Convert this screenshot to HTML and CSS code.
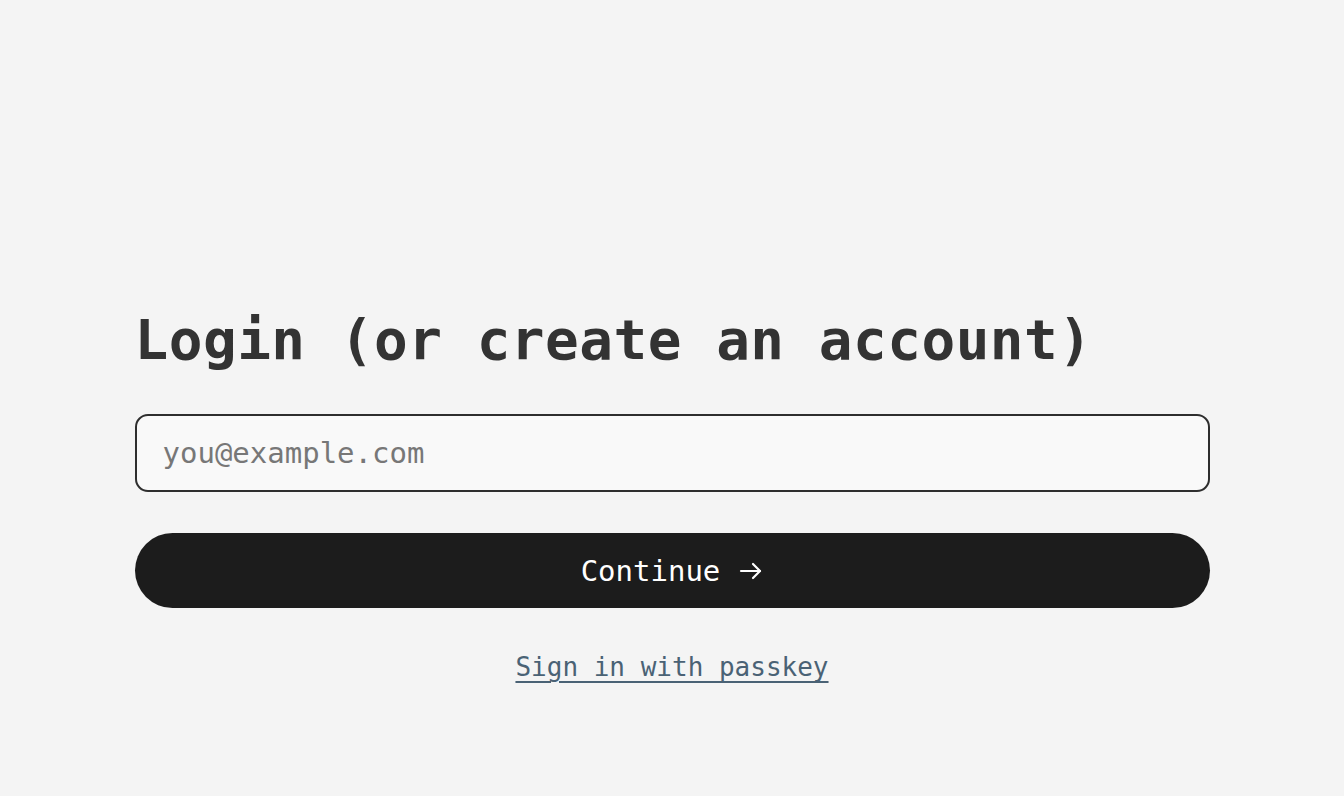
FILE: index.html
```html
<!DOCTYPE html>
<html lang="en">
<head>
<meta charset="utf-8">
<title>Login</title>
<link rel="stylesheet" href="styles.css">
</head>
<body>
<main class="page">
  <section class="login">
    <h1 class="login-title">Login (or create an account)</h1>
    <form class="login-form">
      <input class="email-input" type="email" placeholder="you@example.com">
      <button class="continue-btn" type="button">
        <span>Continue</span>
        <svg class="arrow" width="24" height="24" viewBox="0 0 24 24" fill="none" stroke="currentColor" stroke-width="2.2" stroke-linecap="round" stroke-linejoin="round"><path d="M2 12h19"/><path d="M14 5l7 7-7 7"/></svg>
      </button>
    </form>
    <a class="passkey-link" href="#">Sign in with passkey</a>
  </section>
</main>
</body>
</html>
```
FILE: styles.css
```css
* { box-sizing: border-box; }
html, body {
  margin: 0;
  padding: 0;
  background: #f4f4f4;
  height: 100%;
}
body {
  font-family: "DejaVu Sans Mono", "Liberation Mono", monospace;
  color: #333333;
}
.page {
  display: flex;
  justify-content: center;
  padding-top: 306px;
}
.login {
  width: 1075px;
  display: flex;
  flex-direction: column;
}
.login-title {
  margin: 0 0 41px 0;
  font-size: 56px;
  line-height: 67px;
  font-weight: 700;
  color: #333333;
  letter-spacing: 0.5px;
}
.login-form {
  display: flex;
  flex-direction: column;
  gap: 41px;
}
.email-input {
  height: 78px;
  width: 100%;
  border: 2px solid #2e2e2e;
  border-radius: 13px;
  background: #f9f9f9;
  padding: 0 26px;
  font-family: inherit;
  font-size: 29px;
  color: #333;
  outline: none;
}
.email-input::placeholder {
  color: #777777;
}
.continue-btn {
  height: 75px;
  width: 100%;
  border: none;
  border-radius: 38px;
  background: #1c1c1c;
  color: #ffffff;
  font-family: inherit;
  font-size: 29px;
  display: flex;
  align-items: center;
  justify-content: center;
  gap: 19px;
  cursor: pointer;
}
.arrow { display: block; }
.passkey-link {
  align-self: center;
  margin-top: 44px;
  font-size: 26px;
  line-height: 31px;
  color: #4a6275;
  text-decoration: underline;
  text-underline-offset: 5px;
  text-decoration-thickness: 1.5px;
}
```
